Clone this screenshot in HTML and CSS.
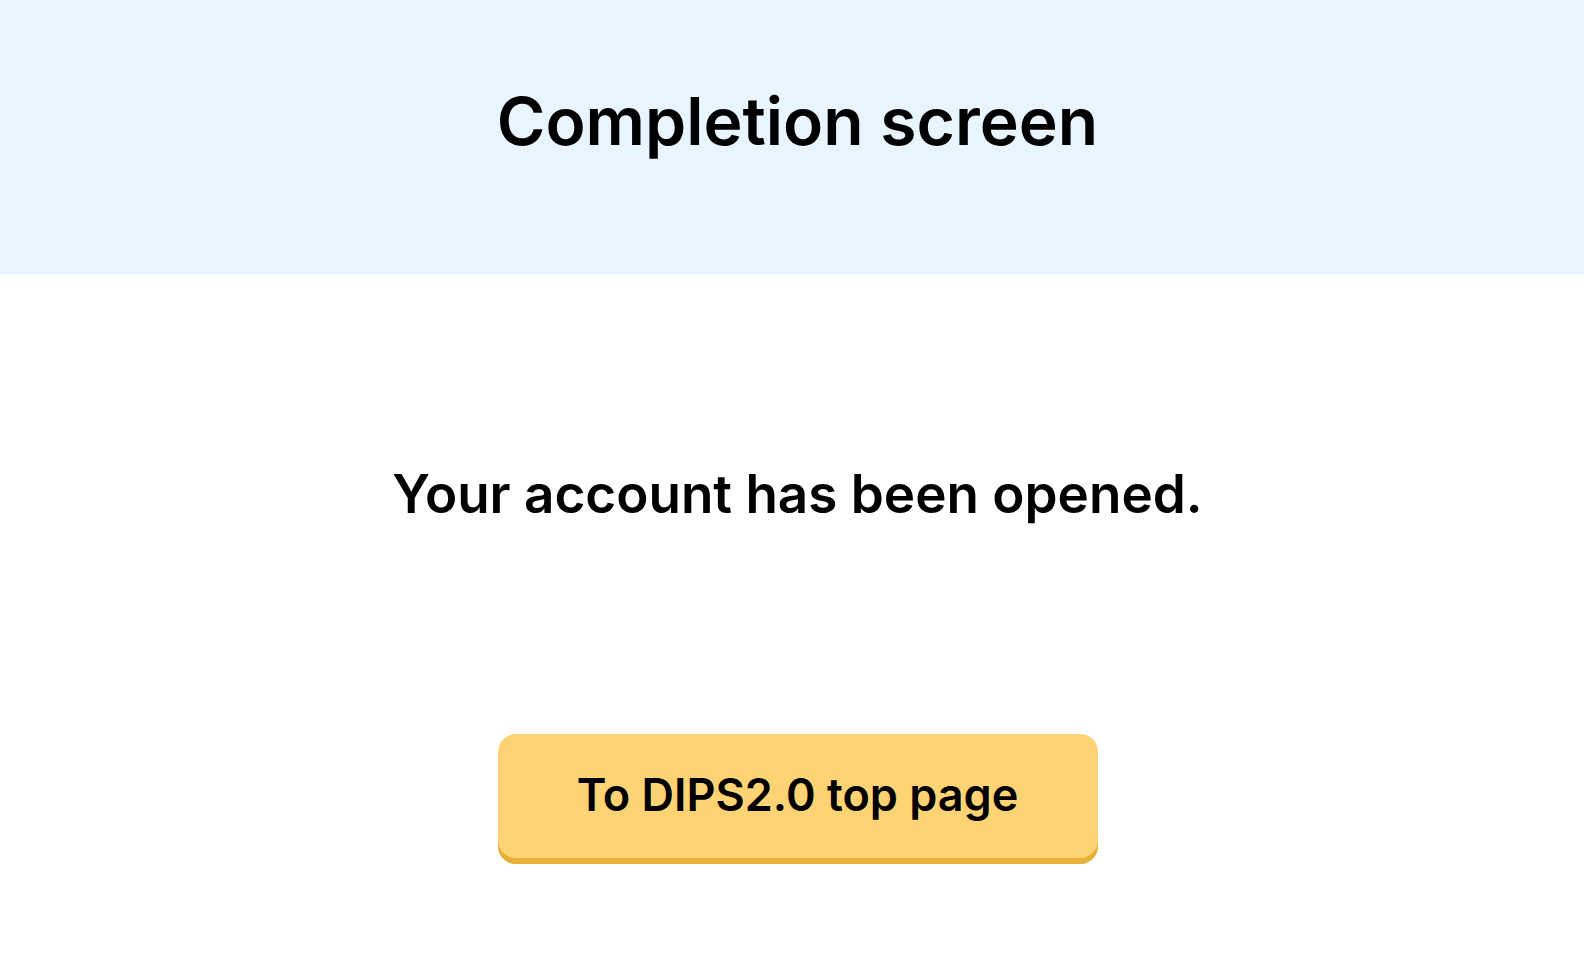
FILE: index.html
```html
<!DOCTYPE html>
<html lang="en">
<head>
    <meta charset="UTF-8">
    <meta name="viewport" content="width=device-width, initial-scale=1.0">
    <title>Completion screen</title>
    <link rel="stylesheet" href="styles.css">
</head>
<body>
    <header class="page-header">
        <h1>Completion screen</h1>
    </header>

    <main class="content">
        <p class="message">Your account has been opened.</p>
        <button class="top-button" type="button">To DIPS2.0 top page</button>
    </main>
</body>
</html>
```

FILE: styles.css
```css
/* Global Styles */
body {
    font-family: 'Inter', 'Noto Sans', sans-serif;
    margin: 0;
    padding: 0;
    background: #ffffff;
    color: #000000;
}

/* Header */
.page-header {
    box-sizing: border-box;
    height: 274px;
    padding: 81px 0 0 11px;
    background-color: #e8f5ff;
}

.page-header h1 {
    margin: 0;
    font-size: 66px;
    font-weight: 600;
    line-height: 80px;
    text-align: center;
}

/* Content */
.content {
    display: flex;
    flex-direction: column;
    align-items: center;
    padding-left: 11px;
}

.message {
    margin: 188px 0 0;
    font-size: 53px;
    font-weight: 600;
    line-height: 64px;
}

/* Button */
.top-button {
    box-sizing: border-box;
    margin-top: 208px;
    width: 600px;
    height: 130px;
    padding: 0 0 10px;
    font-family: inherit;
    font-size: 45px;
    font-weight: 600;
    color: #000000;
    background-color: #fed373;
    border: none;
    border-radius: 18px;
    box-shadow: inset 0 -6px 0 #e6af35;
    cursor: pointer;
}
```
